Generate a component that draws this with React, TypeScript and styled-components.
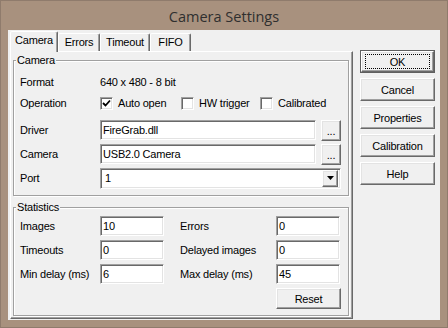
import React from 'react';
import styled, { createGlobalStyle, css } from 'styled-components';

const GlobalStyle = createGlobalStyle`
  html, body {
    margin: 0;
    padding: 0;
    background: #a8917e;
  }
  * {
    box-sizing: border-box;
  }
`;

const uiFont = `"Liberation Sans", Arial, sans-serif`;

const raised = css`
  border-style: solid;
  border-width: 1px;
  border-color: #ffffff #696969 #696969 #ffffff;
  box-shadow: inset -1px -1px 0 #a0a0a0, inset 1px 1px 0 #e3e3e3;
  background: #f0f0f0;
`;

const sunken = css`
  border-style: solid;
  border-width: 1px;
  border-color: #a0a0a0 #ffffff #ffffff #a0a0a0;
  box-shadow: inset 1px 1px 0 #696969, inset -1px -1px 0 #e3e3e3;
`;

const Window = styled.div`
  width: 448px;
  height: 328px;
  background: #a8917e;
  border: 1px solid #8f7b6c;
  display: flex;
  flex-direction: column;
  font-family: ${uiFont};
  font-size: 11px;
  letter-spacing: -0.2px;
  color: #000;
`;

const TitleBar = styled.div`
  height: 29px;
  display: flex;
  align-items: center;
  justify-content: center;
  font-family: "Open Sans", "Liberation Sans", sans-serif;
  font-size: 14.5px;
  letter-spacing: 0;
  color: #2f2f2f;
  padding-top: 1px;
`;

const Client = styled.div`
  flex: 1;
  margin: 0 7px 7px;
  background: #f0f0f0;
  display: flex;
`;

const LeftPane = styled.div`
  padding: 1px 0 0 2px;
  display: flex;
  flex-direction: column;
`;

const TabStrip = styled.div`
  height: 20px;
  display: flex;
  align-items: flex-end;
`;

const Tab = styled.div<{ $active?: boolean; $w: number }>`
  width: ${(p) => p.$w}px;
  height: ${(p) => (p.$active ? 21 : 18)}px;
  background: #f0f0f0;
  border-style: solid;
  border-width: 1px 1px 0 1px;
  border-color: #ffffff #696969 transparent #ffffff;
  box-shadow: inset -1px 0 0 #a0a0a0;
  border-radius: 2px 2px 0 0;
  display: flex;
  justify-content: center;
  padding-top: ${(p) => (p.$active ? 2 : 2)}px;
  line-height: 13px;
  ${(p) =>
    p.$active &&
    css`
      margin-bottom: -1px;
      position: relative;
      z-index: 1;
    `}
`;

const Panel = styled.div`
  width: 343px;
  height: 268px;
  border-style: solid;
  border-width: 1px;
  border-color: #ffffff #696969 #696969 #ffffff;
  box-shadow: inset -1px -1px 0 #a0a0a0;
  padding: 2px 0 0 2px;
`;

const GroupBox = styled.fieldset<{ $pt: number; $gapTop?: number }>`
  width: 336px;
  margin: ${(p) => p.$gapTop ?? 0}px 0 0 0;
  padding: ${(p) => p.$pt}px 6px 6px 6px;
  border: 1px solid #a0a0a0;
  box-shadow: 1px 1px 0 #ffffff, inset 1px 1px 0 #ffffff;
  min-width: 0;
`;

const Legend = styled.legend`
  margin-left: -4px;
  padding: 0 1px;
  line-height: 13px;
  height: 13px;
  background: #f0f0f0;
`;

const Row = styled.div<{ $h: number; $mt?: number }>`
  height: ${(p) => p.$h}px;
  margin-top: ${(p) => p.$mt ?? 0}px;
  display: flex;
  align-items: center;
`;

const Label = styled.div`
  width: 80px;
  flex: none;
  white-space: nowrap;
`;

const CheckItem = styled.label<{ $w?: number }>`
  display: flex;
  align-items: center;
  gap: 5px;
  width: ${(p) => (p.$w ? `${p.$w}px` : 'auto')};
  white-space: nowrap;
`;

const CheckBox = styled.span`
  width: 13px;
  height: 13px;
  background: #fff;
  ${sunken};
  display: flex;
  align-items: center;
  justify-content: center;
`;

const Edit = styled.div<{ $w: number }>`
  width: ${(p) => p.$w}px;
  height: 20px;
  background: #fff;
  ${sunken};
  padding: 0 0 0 2px;
  display: flex;
  align-items: center;
  white-space: nowrap;
`;

const PushButton = styled.div<{ $w: number; $h: number }>`
  width: ${(p) => p.$w}px;
  height: ${(p) => p.$h}px;
  ${raised};
  display: flex;
  align-items: center;
  justify-content: center;
  white-space: nowrap;
`;

const DotsButton = styled(PushButton)`
  margin-left: 5px;
  align-items: flex-end;
  padding-bottom: 3px;
  line-height: 11px;
`;

const DefaultButton = styled.div`
  width: 75px;
  height: 23px;
  border: 1px solid #5f5f5f;
  display: flex;
`;

const DefaultInner = styled.div`
  flex: 1;
  ${raised};
  display: flex;
  padding: 2px 3px 2px 3px;
`;

const FocusRect = styled.div`
  flex: 1;
  border: 1px dotted #000;
  display: flex;
  align-items: center;
  justify-content: center;
`;

const Combo = styled.div`
  width: 241px;
  height: 21px;
  background: #fff;
  ${sunken};
  display: flex;
  align-items: center;
  padding: 2px 2px 2px 4px;
`;

const ComboText = styled.div`
  flex: 1;
`;

const ComboArrow = styled.div`
  width: 16px;
  height: 17px;
  ${raised};
  display: flex;
  align-items: center;
  justify-content: center;
`;

const StatsGrid = styled.div`
  display: grid;
  grid-template-columns: 80px 64px 112px 64px;
  grid-template-rows: 20px 20px 20px 21px;
  row-gap: 4px;
  align-items: center;
`;

const StatLabel = styled.div<{ $right?: boolean }>`
  padding-left: ${(p) => (p.$right ? 16 : 0)}px;
  white-space: nowrap;
`;

const SideColumn = styled.div`
  margin-left: 7px;
  padding-top: 20px;
  display: flex;
  flex-direction: column;
  gap: 5px;
`;

const Check = () => (
  <svg width="9" height="9" viewBox="0 0 9 9">
    <polyline points="1,4 3.5,6.5 8,1.5" fill="none" stroke="#000" strokeWidth="1.8" />
  </svg>
);

const DownArrow = () => (
  <svg width="7" height="4" viewBox="0 0 7 4">
    <polygon points="0,0 7,0 3.5,4" fill="#000" />
  </svg>
);

const stats = [
  { left: 'Images', lv: '10', right: 'Errors', rv: '0' },
  { left: 'Timeouts', lv: '0', right: 'Delayed images', rv: '0' },
  { left: 'Min delay (ms)', lv: '6', right: 'Max delay (ms)', rv: '45' },
];

const App = () => {
  return (
    <Window>
      <GlobalStyle />
      <TitleBar>Camera Settings</TitleBar>
      <Client>
        <LeftPane>
          <TabStrip>
            <Tab $active $w={48}>Camera</Tab>
            <Tab $w={42}>Errors</Tab>
            <Tab $w={50}>Timeout</Tab>
            <Tab $w={41}>FIFO</Tab>
          </TabStrip>
          <Panel>
            <GroupBox $pt={5}>
              <Legend>Camera</Legend>
              <Row $h={20}>
                <Label>Format</Label>
                <div>640 x 480 - 8 bit</div>
              </Row>
              <Row $h={20} $mt={1}>
                <Label>Operation</Label>
                <CheckItem $w={81}>
                  <CheckBox><Check /></CheckBox>
                  Auto open
                </CheckItem>
                <CheckItem $w={79}>
                  <CheckBox />
                  HW trigger
                </CheckItem>
                <CheckItem>
                  <CheckBox />
                  Calibrated
                </CheckItem>
              </Row>
              <Row $h={22} $mt={6}>
                <Label>Driver</Label>
                <Edit $w={216}>FireGrab.dll</Edit>
                <DotsButton $w={20} $h={21}>...</DotsButton>
              </Row>
              <Row $h={22} $mt={2}>
                <Label>Camera</Label>
                <Edit $w={216}>USB2.0 Camera</Edit>
                <DotsButton $w={20} $h={21}>...</DotsButton>
              </Row>
              <Row $h={22} $mt={2}>
                <Label>Port</Label>
                <Combo>
                  <ComboText>1</ComboText>
                  <ComboArrow><DownArrow /></ComboArrow>
                </Combo>
              </Row>
            </GroupBox>
            <GroupBox $pt={2} $gapTop={5}>
              <Legend>Statistics</Legend>
              <StatsGrid>
                {stats.map((s) => (
                  <React.Fragment key={s.left}>
                    <StatLabel>{s.left}</StatLabel>
                    <Edit $w={64}>{s.lv}</Edit>
                    <StatLabel $right>{s.right}</StatLabel>
                    <Edit $w={64}>{s.rv}</Edit>
                  </React.Fragment>
                ))}
                <div />
                <div />
                <div />
                <PushButton $w={65} $h={21}>Reset</PushButton>
              </StatsGrid>
            </GroupBox>
          </Panel>
        </LeftPane>
        <SideColumn>
          <DefaultButton>
            <DefaultInner>
              <FocusRect>OK</FocusRect>
            </DefaultInner>
          </DefaultButton>
          <PushButton $w={75} $h={23}>Cancel</PushButton>
          <PushButton $w={75} $h={23}>Properties</PushButton>
          <PushButton $w={75} $h={23}>Calibration</PushButton>
          <PushButton $w={75} $h={23}>Help</PushButton>
        </SideColumn>
      </Client>
    </Window>
  );
};

export default App;
